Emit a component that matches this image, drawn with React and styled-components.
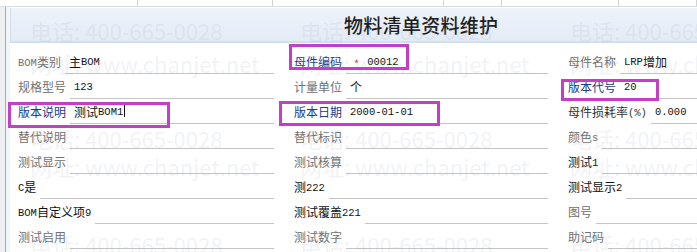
import React from 'react';
import styled, { createGlobalStyle } from 'styled-components';

const GlobalStyle = createGlobalStyle`
  body {
    margin: 0;
    background: #fff;
    font-family: "Noto Sans CJK SC", "Noto Sans", sans-serif;
  }
`;

// 表单字段：每行三列
const rows = [
  [
    { label: 'BOM类别', value: '主BOM' },
    { label: '母件编码', tone: 'link', value: '00012', required: true },
    { label: '母件名称', value: 'LRP增加' },
  ],
  [
    { label: '规格型号', value: '123' },
    { label: '计量单位', value: '个' },
    { label: '版本代号', tone: 'blue', value: '20' },
  ],
  [
    { label: '版本说明', tone: 'blue', value: '测试BOM1', caret: true },
    { label: '版本日期', tone: 'blue', value: '2000-01-01' },
    { label: '母件损耗率(%)', tone: 'dark', value: '0.000' },
  ],
  [
    { label: '替代说明' },
    { label: '替代标识' },
    { label: '颜色s' },
  ],
  [
    { label: '测试显示' },
    { label: '测试核算' },
    { label: '测试1', tone: 'black' },
  ],
  [
    { label: 'C是', tone: 'black' },
    { label: '测222', tone: 'black' },
    { label: '测试显示2', tone: 'black' },
  ],
  [
    { label: 'BOM自定义项9', tone: 'black' },
    { label: '测试覆盖221', tone: 'black' },
    { label: '图号' },
  ],
  [
    { label: '测试启用' },
    { label: '测试数字' },
    { label: '助记码' },
  ],
];

const tabs = [138, 135, 171, 58, 117];

// 水印位置
const marks = [
  { x: 30, y: 14, text: '电话: 400-665-0028' },
  { x: 300, y: 14, text: '电话: 400-665-0028' },
  { x: 570, y: 14, text: '电话: 400-665-0028' },
  { x: 30, y: 47, text: '网址: www.chanjet.net' },
  { x: 300, y: 47, text: '网址: www.chanjet.net' },
  { x: 570, y: 47, text: '网址: www.chanjet.net' },
  { x: 30, y: 122, text: '电话: 400-665-0028' },
  { x: 300, y: 122, text: '电话: 400-665-0028' },
  { x: 570, y: 122, text: '电话: 400-665-0028' },
  { x: 30, y: 150, text: '网址: www.chanjet.net' },
  { x: 300, y: 150, text: '网址: www.chanjet.net' },
  { x: 570, y: 150, text: '网址: www.chanjet.net' },
  { x: 30, y: 228, text: '电话: 400-665-0028' },
  { x: 300, y: 228, text: '电话: 400-665-0028' },
  { x: 570, y: 228, text: '电话: 400-665-0028' },
];

// 标注框
const boxes = [
  { x: 8, y: 102, w: 162, h: 26 },
  { x: 289, y: 44, w: 120, h: 26 },
  { x: 279, y: 101, w: 161, h: 25 },
  { x: 561, y: 79, w: 98, h: 22 },
];

// 中英文分段渲染
const Mixed = ({ text }) =>
  text
    .split(/([\x20-\x7e]+)/)
    .filter(Boolean)
    .map((s, i) =>
      /^[\x20-\x7e]+$/.test(s) ? <Latin key={i}>{s}</Latin> : <span key={i}>{s}</span>
    );

const App = () => {
  return (
    <>
      <GlobalStyle />
      <Root>
        <TopStrip>
          {tabs.map((w, i) => (
            <Tab key={i} $w={w} />
          ))}
          <Tab />
        </TopStrip>
        <Body>
          <Gutter />
          <Sheet>
            <Header>
              <Title>物料清单资料维护</Title>
            </Header>
            <Form>
              {rows.flat().map((f, i) => (
                <Field key={i}>
                  <Label $tone={f.tone}>
                    <Mixed text={f.label} />
                  </Label>
                  <Input>
                    {f.required && <Star>*</Star>}
                    {f.value && <Mixed text={f.value} />}
                    {f.caret && <Caret />}
                  </Input>
                </Field>
              ))}
            </Form>
          </Sheet>
        </Body>
        <Watermark>
          {marks.map((m, i) => (
            <Mark key={i} $x={m.x} $y={m.y}>
              {m.text}
            </Mark>
          ))}
        </Watermark>
        {boxes.map((b, i) => (
          <Box key={i} $x={b.x} $y={b.y} $w={b.w} $h={b.h} />
        ))}
      </Root>
    </>
  );
};

export default App;

const Root = styled.div`
  position: relative;
  width: 697px;
  height: 252px;
  overflow: hidden;
  display: flex;
  flex-direction: column;
`;

const TopStrip = styled.div`
  display: flex;
  height: 6px;
  border-bottom: 1px solid #d9dee5;
  flex-shrink: 0;
`;

const Tab = styled.div`
  width: ${(p) => (p.$w ? `${p.$w}px` : 'auto')};
  flex: ${(p) => (p.$w ? 'none' : 1)};
  border-right: 1px solid #d4d4d4;
  box-sizing: border-box;
  background: #fff;
`;

const Body = styled.div`
  flex: 1;
  display: flex;
  min-height: 0;
`;

const Gutter = styled.div`
  width: 5px;
  background: #eef0f2;
  border-right: 1px solid #a6aab0;
`;

const Sheet = styled.div`
  flex: 1;
  display: flex;
  flex-direction: column;
  border-left: 4px solid #f1f4f8;
  background: #fff;
`;

const Header = styled.div`
  height: 33px;
  margin-top: 1px;
  border-left: 1px solid #d3dce7;
  border-bottom: 2px solid #d3dfeb;
  background: linear-gradient(#eef3fa, #e3ebf5);
  display: flex;
  align-items: center;
  padding-left: 333px;
`;

const Title = styled.div`
  font-size: 19px;
  font-weight: 500;
  color: #1e1e1e;
  letter-spacing: 0.3px;
`;

const Form = styled.div`
  display: grid;
  grid-template-columns: 256px 254px 1fr;
  grid-auto-rows: 25px;
  column-gap: 20px;
  padding: 6px 0 0 8px;
`;

const Field = styled.div`
  display: flex;
  align-items: stretch;
  min-width: 0;
`;

const toneColor = {
  gray: '#707070',
  blue: '#22398a',
  link: '#22398a',
  black: '#111',
  dark: '#333',
};

const Label = styled.div`
  display: flex;
  align-items: center;
  font-size: 12px;
  white-space: nowrap;
  margin-right: 4px;
  color: ${(p) => toneColor[p.$tone || 'gray']};
  text-decoration: ${(p) => (p.$tone === 'link' ? 'underline' : 'none')};
  text-underline-offset: 2px;
`;

const Input = styled.div`
  flex: 1;
  display: flex;
  align-items: center;
  padding-left: 4px;
  border-bottom: 1px solid #c4c4c4;
  font-size: 12px;
  color: #111;
  white-space: nowrap;
`;

const Latin = styled.span`
  font-family: "Liberation Mono", monospace;
  font-size: 10.5px;
  position: relative;
  top: 1px;
`;

const Star = styled.span`
  color: #e0383c;
  font-size: 11px;
  margin: 4px 8px 0 4px;
`;

const Caret = styled.span`
  display: inline-block;
  width: 1px;
  height: 12px;
  margin-left: 1px;
  background: #111;
`;

const Watermark = styled.div`
  position: absolute;
  inset: 0;
  pointer-events: none;
`;

const Mark = styled.div`
  position: absolute;
  left: ${(p) => p.$x}px;
  top: ${(p) => p.$y}px;
  font-size: 22px;
  color: rgba(170, 180, 195, 0.18);
  white-space: nowrap;
`;

const Box = styled.div`
  position: absolute;
  left: ${(p) => p.$x}px;
  top: ${(p) => p.$y}px;
  width: ${(p) => p.$w}px;
  height: ${(p) => p.$h}px;
  border: 3px solid #c43ec8;
  box-sizing: border-box;
`;
